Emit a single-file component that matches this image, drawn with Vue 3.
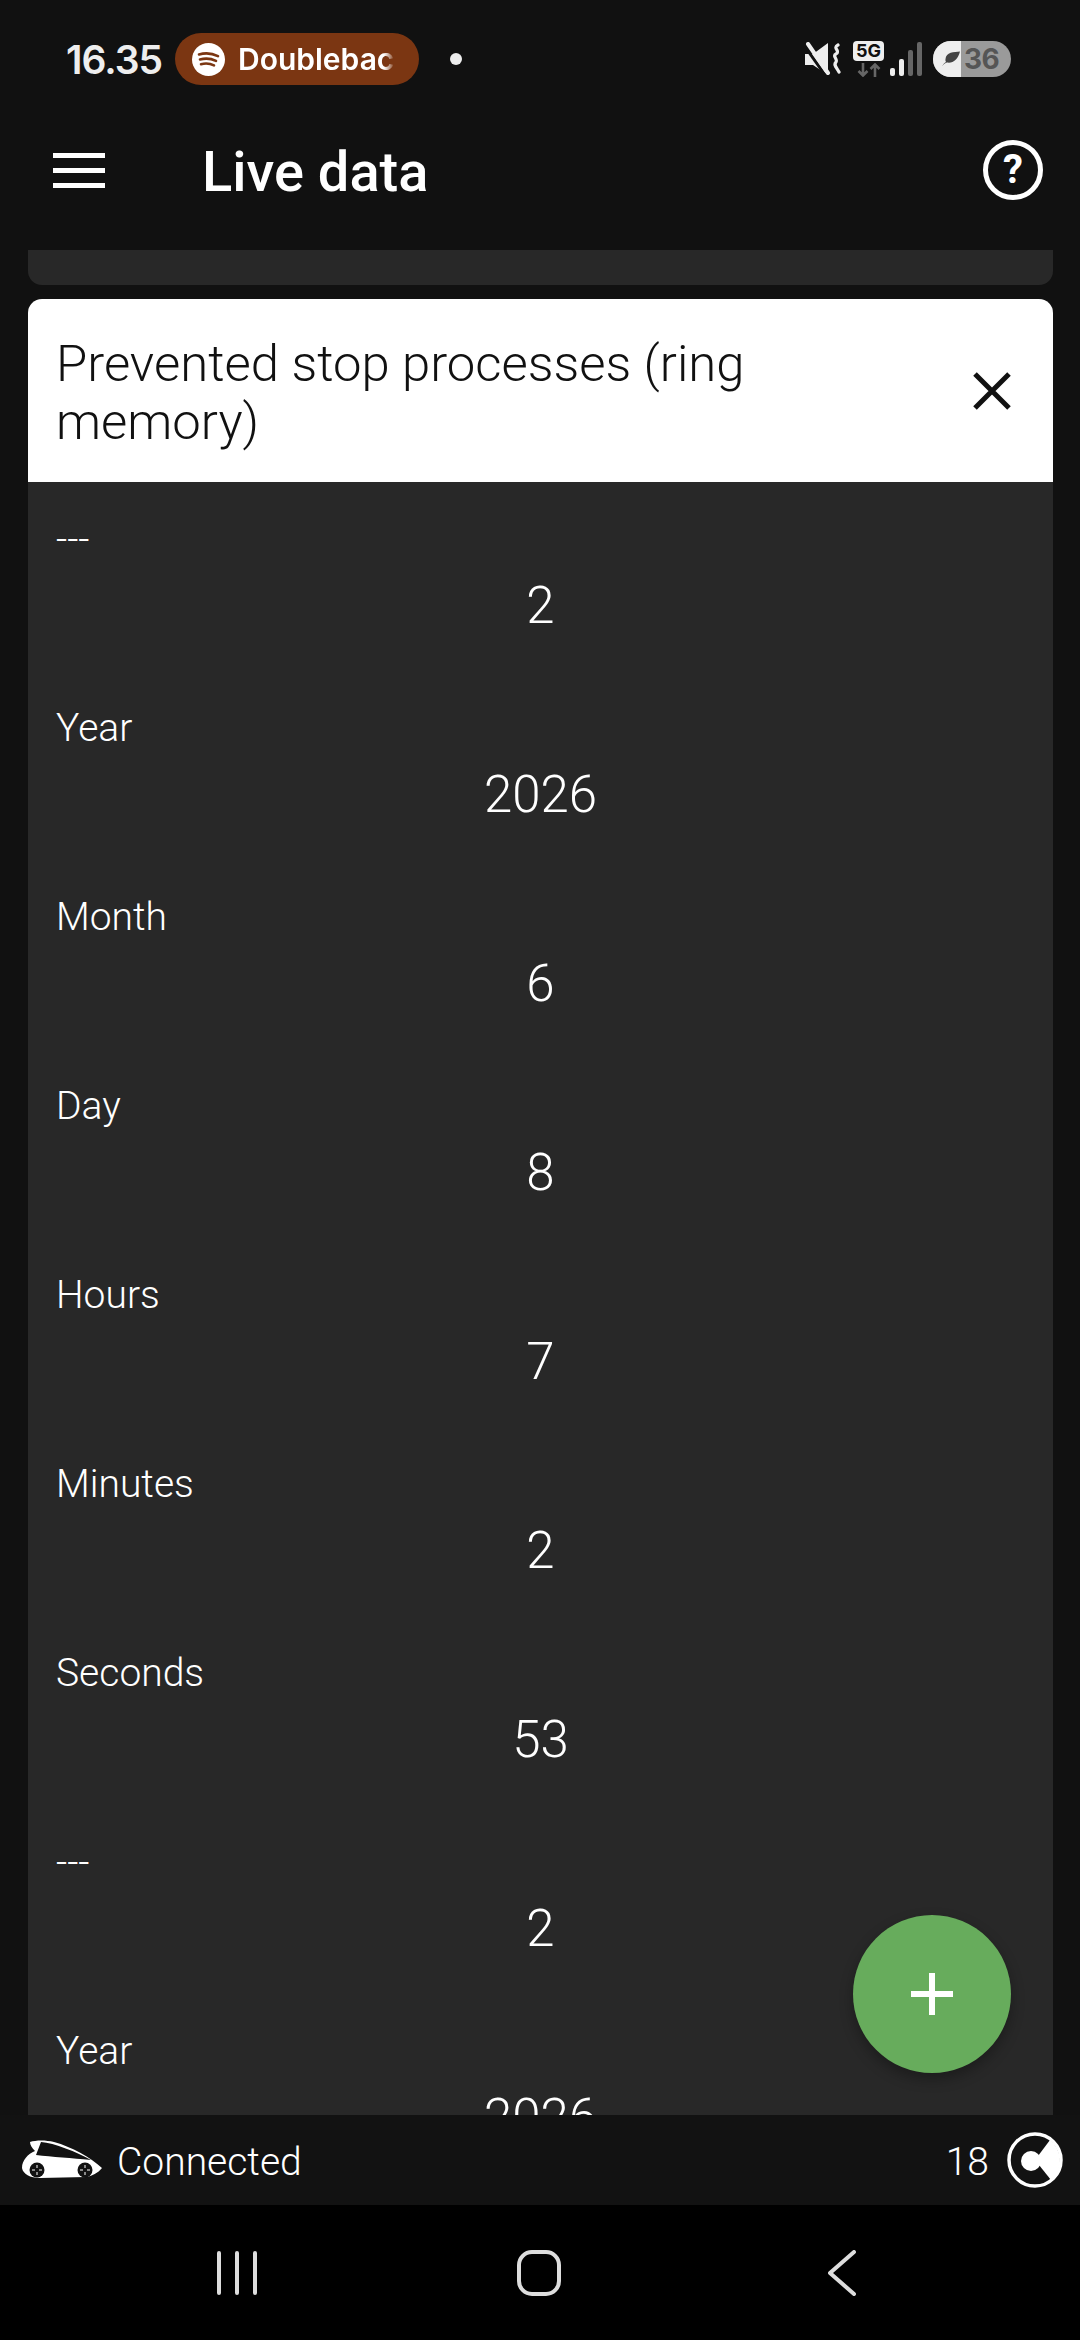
<template>
  <div class="screen">
    <div class="statusBar">
      <span class="clock">16.35</span>
      <div class="mediaPill">
        <svg class="spotify" viewBox="0 0 33 33">
          <circle cx="16.5" cy="16.5" r="16.5" fill="#fff" />
          <path d="M7 11.5c6-1.8 13-1.3 19 1.6M8 16.5c5.3-1.4 11-1 16 1.4M9 21.2c4.5-1.1 9-.8 13 1.2" fill="none" stroke="#7b3612" stroke-width="2.6" stroke-linecap="round" />
        </svg>
        <span class="mediaText">Doublebac</span>
      </div>
      <span class="dot"></span>
      <div class="statusIcons">
        <svg class="mute" viewBox="0 0 36 34">
          <path d="M0 12h8L23 1v32L8 23H0Z" fill="#eee" />
          <path d="M1 6l19 27" stroke="#111" stroke-width="3" />
          <path d="M3 2l20 29" stroke="#eee" stroke-width="4" stroke-linecap="round" />
          <path d="M33 3c-6 3 3 6-2 9-4 2 2 5 0 8-3 3 1 6 3 10" fill="none" stroke="#eee" stroke-width="3.200" stroke-linecap="round" />
        </svg>
        <div class="network">
          <span class="fiveG">5G</span>
          <svg class="arrows" viewBox="0 0 24 14">
            <path d="M6 0v12M1.500 8l4.500 4.500L10.500 8M18 14V2M13.500 6L18 1.500 22.500 6" fill="none" stroke="#666" stroke-width="2.600" />
          </svg>
        </div>
        <svg class="signal" viewBox="0 0 32 34">
          <rect x="0" y="26" width="5" height="8" rx="2" fill="#eee" />
          <rect x="9" y="17" width="5" height="17" rx="2" fill="#eee" />
          <rect x="18" y="8" width="5" height="26" rx="2" fill="#666" />
          <rect x="27" y="0" width="5" height="34" rx="2" fill="#666" />
        </svg>
        <div class="battery">
          <div class="batteryFill">
            <svg class="leaf" viewBox="0 0 20 16">
              <path d="M1 15c2-2 3-3 5-3.500 6 1 11-3 13-11C13 1 5 1 4.500 8 4.300 9.500 4.500 10 5 11 3.500 12 2 13.500 1 15Z" fill="#444" />
            </svg>
          </div>
          <span class="batteryLevel">36</span>
        </div>
      </div>
    </div>

    <header class="appBar">
      <div class="burger"><span></span><span></span><span></span></div>
      <h1 class="pageTitle">Live data</h1>
      <div class="helpIcon">?</div>
    </header>

    <main class="content">
      <div class="cardStub"></div>
      <section class="card">
        <div class="cardHeader">
          <h2 class="cardTitle">Prevented stop processes (ring memory)</h2>
          <svg class="closeIcon" viewBox="0 0 40 40">
            <path d="M3 3l34 34M37 3L3 37" stroke="#111" stroke-width="5" />
          </svg>
        </div>
        <div class="cardBody">
          <div class="row" v-for="(row, i) in rows" :key="i">
            <div class="rowLabel">{{ row.label }}</div>
            <div class="rowValue">{{ row.value }}</div>
          </div>
        </div>
      </section>
      <button class="fab" type="button">
        <svg viewBox="0 0 42 42" width="42" height="42">
          <path d="M21 0v42M0 21h42" stroke="#fff" stroke-width="6" />
        </svg>
      </button>
    </main>

    <footer class="connBar">
      <svg class="carIcon" viewBox="0 0 80 40">
        <path d="M8 2C14 0 24 0 32 2 50 7 68 17 80 28 76 33 70 36 64 37L18 38C8 38 1 34 0 28 0 20 6 14 13 11 10 8 8 5 8 2Z" fill="#fff" />
        <path d="M19 2C32 3 55 12 69 20 50 18 30 17 14 15Z" fill="#121212" />
        <circle cx="15" cy="30" r="7.500" fill="#121212" />
        <circle cx="63" cy="30" r="7.500" fill="#121212" />
        <path d="M15 25v3M15 32v3M10 30h3M17 30h3M63 25v3M63 32v3M58 30h3M65 30h3" stroke="#fff" stroke-width="1" />
      </svg>
      <span class="connText">Connected</span>
      <span class="connCount">18</span>
      <svg class="syncIcon" viewBox="0 0 56 56">
        <circle cx="28" cy="28" r="26" fill="none" stroke="#fff" stroke-width="3.500" />
        <path d="M28 28L43 8A26 26 0 0 1 44 48Z" fill="#fff" />
        <circle cx="24" cy="29" r="10" fill="#fff" />
      </svg>
    </footer>

    <nav class="navBar">
      <svg class="navRecents" viewBox="0 0 40 44">
        <path d="M2 2v40M20 2v40M38 2v40" stroke="#ddd" stroke-width="4" stroke-linecap="round" />
      </svg>
      <svg class="navHome" viewBox="0 0 44 46">
        <rect x="2" y="2" width="40" height="42" rx="13" fill="none" stroke="#ddd" stroke-width="4" />
      </svg>
      <svg class="navBack" viewBox="0 0 28 46">
        <path d="M26 2L2 23l24 21" fill="none" stroke="#ddd" stroke-width="4" stroke-linecap="round" stroke-linejoin="round" />
      </svg>
    </nav>
  </div>
</template>

<script setup>
const rows = [
  { label: '---', value: '2' },
  { label: 'Year', value: '2026' },
  { label: 'Month', value: '6' },
  { label: 'Day', value: '8' },
  { label: 'Hours', value: '7' },
  { label: 'Minutes', value: '2' },
  { label: 'Seconds', value: '53' },
  { label: '---', value: '2' },
  { label: 'Year', value: '2026' }
]
</script>

<style>
html,
body {
  margin: 0;
  background: #000;
}
</style>

<style scoped>
.screen {
  width: 1080px;
  height: 2340px;
  display: flex;
  flex-direction: column;
  background: #111;
  color: #fff;
  font-family: Roboto, "Liberation Sans", sans-serif;
  overflow: hidden;
}

.statusBar {
  height: 90px;
  flex: none;
  display: flex;
  align-items: center;
  padding: 28px 69px 0 66px;
  box-sizing: border-box;
  font-family: Inter, Roboto, sans-serif;
}

.clock {
  width: 96px;
  margin-right: 13px;
  font-size: 39px;
  font-weight: 600;
  letter-spacing: -1px;
  color: #eee;
  white-space: nowrap;
}

.mediaPill {
  width: 244px;
  height: 52px;
  border-radius: 26px;
  background: #7b3612;
  display: flex;
  align-items: center;
  gap: 13px;
  padding-left: 17px;
  box-sizing: border-box;
}

.spotify {
  width: 33px;
  height: 33px;
  flex: none;
}

.mediaText {
  width: 157px;
  overflow: hidden;
  font-size: 30px;
  font-weight: 600;
  white-space: nowrap;
  -webkit-mask-image: linear-gradient(to right, #000 93%, transparent);
  mask-image: linear-gradient(to right, #000 93%, transparent);
}

.dot {
  width: 12px;
  height: 12px;
  border-radius: 50%;
  background: #eee;
  margin-left: 31px;
}

.statusIcons {
  margin-left: auto;
  display: flex;
  align-items: center;
}

.mute {
  width: 36px;
  height: 34px;
  margin-right: 12px;
}

.network {
  width: 31px;
  margin-right: 6px;
  display: flex;
  flex-direction: column;
  align-items: center;
  gap: 2px;
}

.fiveG {
  width: 31px;
  height: 20px;
  border-radius: 4px;
  background: #eee;
  color: #111;
  font-size: 18px;
  font-weight: 700;
  line-height: 20px;
  text-align: center;
}

.arrows {
  width: 24px;
  height: 14px;
}

.signal {
  width: 32px;
  height: 34px;
  margin-right: 11px;
}

.battery {
  width: 78px;
  height: 36px;
  border-radius: 18px;
  background: #9a9a9a;
  overflow: hidden;
  display: flex;
  align-items: center;
}

.batteryFill {
  width: 28px;
  height: 100%;
  background: #eee;
  display: flex;
  align-items: center;
  justify-content: flex-end;
}

.leaf {
  width: 20px;
  height: 16px;
}

.batteryLevel {
  margin-left: 3px;
  font-size: 28px;
  font-weight: 700;
  letter-spacing: -0.5px;
  color: #555;
}

.appBar {
  height: 160px;
  flex: none;
  display: flex;
  align-items: center;
  padding: 0 37px 0 53px;
  box-sizing: border-box;
}

.burger {
  width: 52px;
  height: 35px;
  display: flex;
  flex-direction: column;
  justify-content: space-between;
}

.burger span {
  height: 5px;
  background: #fff;
}

.pageTitle {
  margin: 4px 0 0 97px;
  font-size: 56px;
  font-weight: 500;
  line-height: 60px;
}

.helpIcon {
  margin-left: auto;
  width: 60px;
  height: 60px;
  box-sizing: border-box;
  border: 5px solid #fff;
  border-radius: 50%;
  font-size: 40px;
  font-weight: 700;
  line-height: 50px;
  text-align: center;
}

.content {
  position: relative;
  flex: 1;
  min-height: 0;
  display: flex;
  flex-direction: column;
  gap: 14px;
  padding: 0 27px 0 28px;
}

.cardStub {
  height: 35px;
  flex: none;
  background: #282828;
  border-radius: 0 0 14px 14px;
}

.card {
  flex: 1;
  min-height: 0;
  display: flex;
  flex-direction: column;
}

.cardHeader {
  height: 183px;
  flex: none;
  box-sizing: border-box;
  display: flex;
  align-items: center;
  justify-content: space-between;
  padding: 0 41px 0 28px;
  background: #fff;
  border-radius: 14px 14px 0 0;
}

.cardTitle {
  margin: 4px 0 0;
  width: 760px;
  color: #111;
  font-size: 50.8px;
  font-weight: 300;
  line-height: 58px;
}

.closeIcon {
  width: 40px;
  height: 40px;
}

.cardBody {
  flex: 1;
  min-height: 0;
  overflow: hidden;
  background: #282828;
  padding-top: 34px;
}

.row {
  height: 189px;
  box-sizing: border-box;
  padding: 0 28px;
}

.rowLabel {
  height: 46px;
  font-size: 39px;
  font-weight: 300;
  line-height: 46px;
}

.rowValue {
  margin-top: 14px;
  font-size: 51px;
  font-weight: 300;
  line-height: 60px;
  text-align: center;
}

.fab {
  position: absolute;
  right: 69px;
  bottom: 42px;
  width: 158px;
  height: 158px;
  padding: 0;
  border: none;
  border-radius: 50%;
  background: #67ac5c;
  box-shadow: 0 6px 14px rgba(0, 0, 0, 0.3);
  display: flex;
  align-items: center;
  justify-content: center;
}

.connBar {
  height: 90px;
  flex: none;
  display: flex;
  align-items: center;
  padding: 3px 17px 0 22px;
  box-sizing: border-box;
  background: #121212;
}

.carIcon {
  width: 80px;
  height: 40px;
  margin-top: -3px;
}

.connText {
  margin-left: 15px;
  font-size: 39px;
  font-weight: 300;
}

.connCount {
  margin-left: auto;
  margin-right: 18px;
  font-size: 39px;
  font-weight: 300;
}

.syncIcon {
  width: 56px;
  height: 56px;
  margin-top: -3px;
}

.navBar {
  height: 135px;
  flex: none;
  display: flex;
  align-items: center;
  padding-left: 217px;
  background: #000;
}

.navRecents {
  width: 40px;
  height: 44px;
}

.navHome {
  width: 44px;
  height: 46px;
  margin-left: 260px;
}

.navBack {
  width: 28px;
  height: 46px;
  margin-left: 267px;
}
</style>
